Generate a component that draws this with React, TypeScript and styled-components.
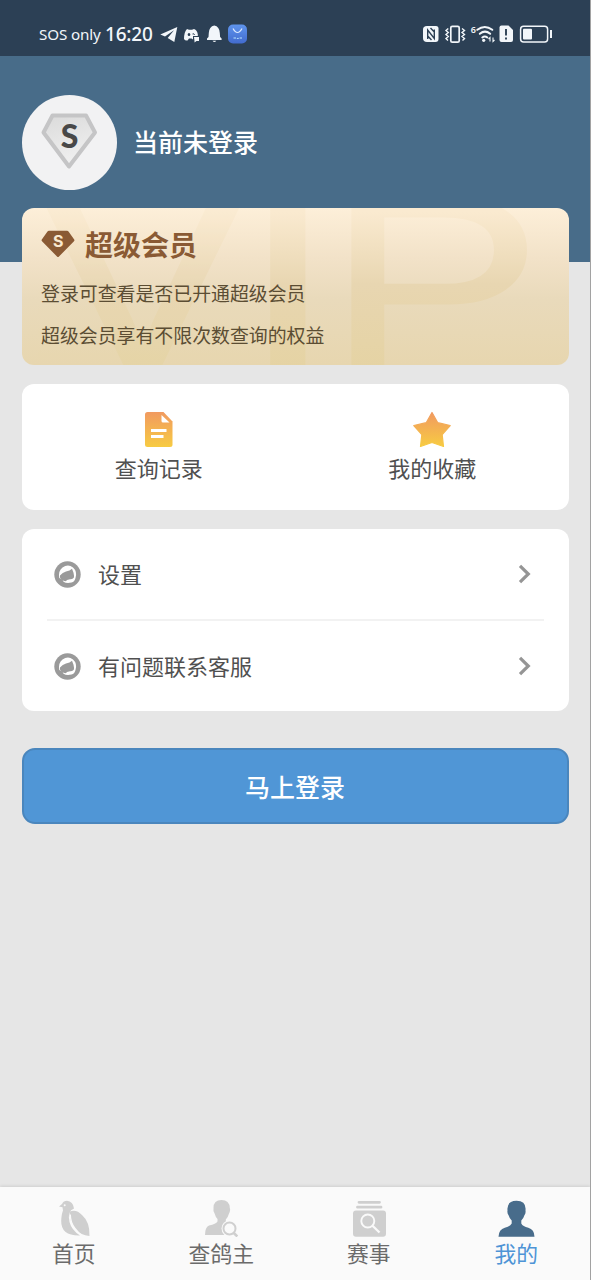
import React from "react";
import styled, { createGlobalStyle } from "styled-components";

const GlobalStyle = createGlobalStyle`
  * { box-sizing: border-box; }
  html, body { margin: 0; padding: 0; }
  body {
    background: #e6e6e6;
    font-family: "Noto Sans CJK SC", "Noto Sans", sans-serif;
    color: #505050;
  }
  svg { display: block; flex: none; }
  button { font: inherit; color: inherit; background: none; border: 0; padding: 0; }
`;

const Screen = styled.div`
  display: flex;
  flex-direction: column;
  width: 591px;
  height: 1280px;
  overflow: hidden;
  background: #e6e6e6;
  border-right: 1px solid rgba(60, 60, 60, 0.4);
`;

const StatusBar = styled.div`
  display: flex;
  justify-content: space-between;
  flex: none;
  height: 56px;
  padding: 11px 38px 0 39px;
  background: #2c4055;
  color: #f2f6fa;
`;

const StatusGroup = styled.div`
  display: flex;
  align-items: center;
  height: 45px;
`;

const Carrier = styled.span`
  width: 66px;
  font: 400 15.2px "Noto Sans", sans-serif;
  letter-spacing: -0.15px;
  white-space: nowrap;
`;

const Clock = styled.span`
  width: 55px;
  font: 500 19px "Noto Sans", sans-serif;
  letter-spacing: -0.2px;
  white-space: nowrap;
`;

const Header = styled.header`
  display: flex;
  align-items: flex-start;
  flex: none;
  gap: 16px;
  height: 206px;
  padding: 38.5px 22px 0;
  background: #486c89;
`;

const Avatar = styled.div`
  display: flex;
  justify-content: center;
  width: 95px;
  height: 95px;
  padding: 16px 2px 0 0;
  border-radius: 50%;
  background: #f2f2f3;
`;

const UserName = styled.h1`
  margin: 0;
  font-size: 25px;
  font-weight: 500;
  line-height: 93px;
  color: #fff;
`;

const Content = styled.main`
  display: flex;
  flex-direction: column;
  flex: 1;
  margin-top: -54px;
  padding: 0 21px 0 22px;
`;

const Card = styled.section`
  flex: none;
  border-radius: 12px;
  background: #fff;
`;

const VipCard = styled(Card)`
  position: relative;
  height: 157px;
  padding: 16px 19px 0;
  overflow: hidden;
  background: linear-gradient(#fdefd9 0%, #f2e2c8 32%, #e9dabb 58%, #e7d6af 100%);
`;

const Watermark = styled.svg`
  position: absolute;
  inset: 0;
`;

const VipBody = styled.div`
  position: relative;
`;

const VipTitle = styled.h2`
  display: flex;
  align-items: center;
  gap: 10px;
  height: 40px;
  margin: 0 0 8px;
  font-size: 28px;
  font-weight: 700;
  color: #8a5a34;
`;

const VipText = styled.p`
  margin: 0;
  font-size: 18.9px;
  line-height: 42px;
  color: #5b4d33;
`;

const Shortcuts = styled(Card)`
  display: grid;
  grid-template-columns: 1fr 1fr;
  height: 126px;
  margin-top: 19px;
  padding-top: 26px;
`;

const Shortcut = styled.button`
  display: flex;
  flex-direction: column;
  align-items: center;
  gap: 4px;
  font-size: 22px;
  line-height: 31px;
`;

const Menu = styled(Card)`
  height: 182px;
  margin-top: 19px;
  padding: 0 25px;
`;

const MenuRow = styled.button`
  display: flex;
  align-items: center;
  width: 100%;
  height: 90px;
  padding: 0 12px 0 7px;
  font-size: 22px;

  & + & {
    height: 92px;
    border-top: 2px solid #f2f2f2;
  }
`;

const MenuLabel = styled.span`
  flex: 1;
  margin-left: 17px;
  padding-bottom: 3px;
  text-align: left;
`;

const LoginButton = styled.button`
  flex: none;
  height: 76px;
  margin-top: 37px;
  padding-right: 1px;
  border: 2px solid #4a86bd;
  border-radius: 13px;
  background: #5096d6;
  color: #fff;
  font-size: 25px;
  font-weight: 500;
  line-height: 70px;
`;

const TabBar = styled.nav`
  display: grid;
  grid-template-columns: repeat(4, 1fr);
  flex: none;
  height: 93px;
  background: #fafafa;
  box-shadow: 0 -1px 3px rgba(0, 0, 0, 0.1);
`;

const Tab = styled.button<{ $active?: boolean }>`
  display: flex;
  flex-direction: column;
  align-items: center;
  padding-top: 12px;
  font-size: 21.8px;
  line-height: 31px;
  color: ${(p) => (p.$active ? "#4e94d6" : "#6b6b6b")};
`;

const StatusIcons = () => (
  <svg width="130" height="24" viewBox="422 21.500 130 24" fill="none" stroke="#f2f6fa">
    <path d="M427 25.500h9q2.500 0 2.500 2.500v10.500q0 3-3 3h-8.500q-4 0-4-4v-8.500q0-3.500 4-3.500z" fill="#f2f6fa" stroke="none" />
    <path d="M427.700 38.500v-9l6.600 8.500v-9M430.500 27.500l3.800 4M427.700 35.500l3.800 4" stroke="#2c4055" strokeWidth="1.400" />
    <rect x="450.800" y="25.800" width="8.400" height="15.900" rx="1.500" strokeWidth="1.700" />
    <path d="M448.300 28l-2.300 2 2.300 2-2.300 2 2.300 2-2.300 2 2 2M462 28l2.500 2-2.500 2 2.500 2-2.500 2 2.500 2-2 2" strokeWidth="1.400" />
    <text x="470.800" y="32" fontSize="9" fontWeight="600" fontFamily="Noto Sans" fill="#f2f6fa" stroke="none">6</text>
    <path d="M477.300 29.300q7.500-5.600 15 0M479.800 33.300q5.200-4.300 10.400 0M482.300 37q2.500-2 5 0" strokeWidth="2" strokeLinecap="round" />
    <circle cx="483.700" cy="39.800" r="1.600" fill="#f2f6fa" stroke="none" />
    <path d="M490 41v-4l-1.500 1.500M493 37v4l1.500-1.500" strokeWidth="1.100" />
    <path d="M501.500 25h7l4.500 4.500v10q0 2-2 2h-9.500q-2 0-2-2V27q0-2 2-2z" fill="#f2f6fa" stroke="none" />
    <path d="M506 28.500v6.500M506 37v2" stroke="#2c4055" strokeWidth="1.900" />
    <rect x="520.600" y="25.800" width="27" height="15.600" rx="3" strokeWidth="1.500" />
    <rect x="523" y="28.300" width="9" height="10.600" rx="1" fill="#f2f6fa" stroke="none" />
    <path d="M551 29.500v8" strokeWidth="2" />
  </svg>
);

const NoticeIcons = () => (
  <svg width="88" height="24" viewBox="160 21.500 88 24">
    <defs>
      <linearGradient id="bag" x1="0" y1="0" x2="0" y2="1">
        <stop stopColor="#5f95ee" /><stop offset="1" stopColor="#426bce" />
      </linearGradient>
    </defs>
    <path d="M177.300 26.500L160.300 34l4.700 1.900 9-6.100-6.300 7.700 6.600 4z" fill="#f2f6fa" />
    <path d="M187 28.500l2 .7h3l2-.7q3.300 1 3.800 5.500v1.500H193V39l-1.500-1H189l-1.500 2q-2.500.3-3.500-1.500 0-7 3-10z" fill="#f2f6fa" />
    <path d="M194 36.500h5v4h-2.500l-2 1.500v-1.500z" fill="#f2f6fa" />
    <ellipse cx="189" cy="34" rx="1.300" ry="1.500" fill="#2c4055" /><path d="M192.500 33.500q1.500-1 2 1" fill="none" stroke="#2c4055" />
    <path d="M214.300 25q5.200 1 5.500 7.500l.3 4 1.500 1.500v1.500H207V38l1.500-1.500.3-4q.3-6.500 5.500-7.500zM212.500 40.300h3.800q-1.900 2.500-3.800 0z" fill="#f2f6fa" />
    <rect x="228" y="24" width="19" height="19" rx="5" fill="url(#bag)" />
    <path d="M233 28q4.500 8 9 0" fill="none" stroke="#dceaff" strokeWidth="1.200" />
    <path d="M233.500 37.500h2.500m1 0q.8 1 1.600 0m1 0h2.400" fill="none" stroke="#b9e5ff" strokeWidth="1.200" />
  </svg>
);

const AvatarGem = () => (
  <svg width="58" height="60" viewBox="0 0 58 60">
    <defs>
      <linearGradient id="gem" x1="0" y1="0" x2="0.3" y2="1">
        <stop stopColor="#dadada" /><stop offset="1" stopColor="#f0f0f0" />
      </linearGradient>
    </defs>
    <path d="M12.500 4.500h33.500L55 21.500 29 55.500 3.500 21.500z" fill="url(#gem)" stroke="#c5c5c6" strokeWidth="4" strokeLinejoin="round" />
    <text x="29.500" y="37" textAnchor="middle" fontFamily="Lato" fontWeight="900" fontSize="32" fill="#484848">S</text>
  </svg>
);

const VipGem = () => (
  <svg width="34" height="28" viewBox="0 0 34 28">
    <path d="M8 .8h18q1 0 1.700.9l5.300 7.500q.9 1 0 2L18 26.500q-1 1.100-2 0L1 11.200q-.9-1 0-2L6.300 1.700Q7 .8 8 .8z" fill="#8a5a34" />
    <text x="17.300" y="17" textAnchor="middle" fontFamily="Inter" fontWeight="700" fontSize="16" fill="#f9e8cf">S</text>
  </svg>
);

const VipWatermark = () => (
  <Watermark width="547" height="157" viewBox="0 0 547 157">
    <defs>
      <linearGradient id="mark" gradientUnits="userSpaceOnUse" x1="0" y1="-173" x2="0" y2="0">
        <stop offset=".08" stopColor="#faead0" />
        <stop offset=".5" stopColor="#e8d6b1" />
        <stop offset="1" stopColor="#e5d3a3" />
      </linearGradient>
    </defs>
    <g fontFamily="Liberation Sans" fontSize="252" fill="url(#mark)" stroke="url(#mark)">
      <text transform="translate(20 163) scale(1.2 1)" strokeWidth="3" opacity=".75">V</text>
      <text transform="translate(217.500 163) scale(1.38 1)" strokeWidth="2">I</text>
      <text transform="translate(304 163) scale(1.29 1)" strokeWidth="2">P</text>
    </g>
  </Watermark>
);

const WarmGradient = ({ id }: { id: string }) => (
  <defs>
    <linearGradient id={id} x1="0" y1="0" x2="0" y2="1">
      <stop stopColor="#f19a60" /><stop offset="1" stopColor="#f7cb42" />
    </linearGradient>
  </defs>
);

const RecordIcon = () => (
  <svg width="40" height="38" viewBox="0 0 40 38">
    <WarmGradient id="record" />
    <path d="M8.500 2H24.500l9 9.500v23q0 2.500-2.500 2.500H8.500Q6 37 6 34.500v-30Q6 2 8.500 2z" fill="url(#record)" />
    <path d="M22.500 5v6q0 1.500 1.500 1.500h6.500z" fill="#fff" />
    <path d="M12 20.500h15.500M12 26.500h12.500" stroke="#fff" strokeWidth="2.800" />
  </svg>
);

const StarIcon = () => (
  <svg width="40" height="38" viewBox="0 0 40 38">
    <WarmGradient id="star" />
    <path d="M20 2.500l5.800 10.200 12.400 2.800-8 9.200 1.300 11.800L20 32.500 8.500 36.500l1.300-11.800-8-9.200 12.400-2.800z" fill="url(#star)" stroke="url(#star)" strokeWidth="1.200" strokeLinejoin="round" />
  </svg>
);

const ServiceIcon = () => (
  <svg width="27" height="27" viewBox="0 0 27 27">
    <circle cx="13.500" cy="13.500" r="13.200" fill="#9a9a9a" />
    <path d="M5.300 17Q4 10 8.500 6.500 14 2.500 19 6.500q4.500 4 2.500 10.500-.7 3.500-4 4.600-5 1.200-8-.8l-1-2z" fill="#fff" />
    <path d="M6 14.500q2.500-2.800 6-4 4-.5 6-2.700l1.500 4q.8 3 .3 5-1.300 1.800-3.800 1.400l-3 .8q-.5 1.500-2.500 1-3.500-.5-4.500-3.500z" fill="#9a9a9a" />
  </svg>
);

const Chevron = () => (
  <svg width="14" height="20" viewBox="0 0 14 20">
    <path d="M2 1.800L10.300 10 2 18.200" fill="none" stroke="#959595" strokeWidth="3.200" />
  </svg>
);

const BirdIcon = () => (
  <svg width="40" height="38" viewBox="0 0 40 38" fill="#cfcfcf">
    <path d="M5 7.500L8 5Q9.500 1.800 13 1.800q6 .4 7 7.700Q13 12 15.500 23q2 8 10.500 13.500Q7 37 7.200 22 7.500 15 9 11.500L8.500 8.300z" />
    <path d="M15.500 12.700Q22 9.500 28 16q8 7 7.500 21-9-.8-14-7Q15.500 23 15.500 12.700z" />
    <path d="M16.300 15.500q0 8 4.700 14 3 4 7 7.500" fill="none" stroke="#fafafa" strokeWidth="1.300" />
    <circle cx="10.700" cy="6.300" r="1" fill="#fafafa" />
  </svg>
);

const OwnerIcon = () => (
  <svg width="40" height="38" viewBox="0 0 40 38" fill="#cfcfcf">
    <path d="M12.500 9q0-8 8-8t8.300 8q1 2-1 6-1 4-3 5.500v3q-2.500 2-2.500 6 0 4 3 6.500H4q0-8 4-9.500 7-1.500 8.500-4v-2.500q-2-2-2.700-5-2-3-1.300-6z" />
    <circle cx="28.500" cy="29.500" r="8" fill="#fafafa" />
    <circle cx="28.500" cy="29.500" r="6" fill="#fafafa" stroke="#cfcfcf" strokeWidth="2" />
    <path d="M32.800 34l3.500 3.500" stroke="#cfcfcf" strokeWidth="2.500" />
  </svg>
);

const RaceIcon = () => (
  <svg width="40" height="38" viewBox="0 0 40 38">
    <path d="M10 3.300h20.500M8.500 8.200h23.500" stroke="#cfcfcf" strokeWidth="2.800" strokeLinecap="round" />
    <rect x="4" y="11.500" width="33" height="26.300" rx="3" fill="#cfcfcf" />
    <circle cx="18.800" cy="22" r="6.500" fill="none" stroke="#fafafa" strokeWidth="1.900" />
    <path d="M23.500 26.700L30.500 33.500" stroke="#fafafa" strokeWidth="2.300" />
  </svg>
);

const ProfileIcon = () => (
  <svg width="40" height="38" viewBox="0 0 40 38">
    <path d="M11.500 11.500Q10.500 2 20.500 1.800 30.500 2 29.500 11.500q.5 3-1.200 5-.8 3-3 5v3q1.500 3 7 4.200 6 1.500 6.200 9H2.500q.3-7.500 6.300-9 5.500-1.200 6.900-4.200v-3q-2.200-2-3-5-1.700-2-1.200-5z" fill="#486c8b" />
  </svg>
);

const tabs = [
  { label: "首页", Icon: BirdIcon },
  { label: "查鸽主", Icon: OwnerIcon },
  { label: "赛事", Icon: RaceIcon },
  { label: "我的", Icon: ProfileIcon, active: true },
];

export default function App() {
  return (
    <>
      <GlobalStyle />
      <Screen>
        <StatusBar>
          <StatusGroup>
            <Carrier>SOS only</Carrier>
            <Clock>16:20</Clock>
            <NoticeIcons />
          </StatusGroup>
          <StatusGroup><StatusIcons /></StatusGroup>
        </StatusBar>
        <Header>
          <Avatar><AvatarGem /></Avatar>
          <UserName>当前未登录</UserName>
        </Header>
        <Content>
          <VipCard>
            <VipWatermark />
            <VipBody>
              <VipTitle><VipGem />超级会员</VipTitle>
              <VipText>登录可查看是否已开通超级会员</VipText>
              <VipText>超级会员享有不限次数查询的权益</VipText>
            </VipBody>
          </VipCard>
          <Shortcuts>
            <Shortcut><RecordIcon />查询记录</Shortcut>
            <Shortcut><StarIcon />我的收藏</Shortcut>
          </Shortcuts>
          <Menu>
            {["设置", "有问题联系客服"].map((label) => (
              <MenuRow key={label}>
                <ServiceIcon />
                <MenuLabel>{label}</MenuLabel>
                <Chevron />
              </MenuRow>
            ))}
          </Menu>
          <LoginButton>马上登录</LoginButton>
        </Content>
        <TabBar>
          {tabs.map(({ label, Icon, active }) => (
            <Tab key={label} $active={active}><Icon />{label}</Tab>
          ))}
        </TabBar>
      </Screen>
    </>
  );
}
